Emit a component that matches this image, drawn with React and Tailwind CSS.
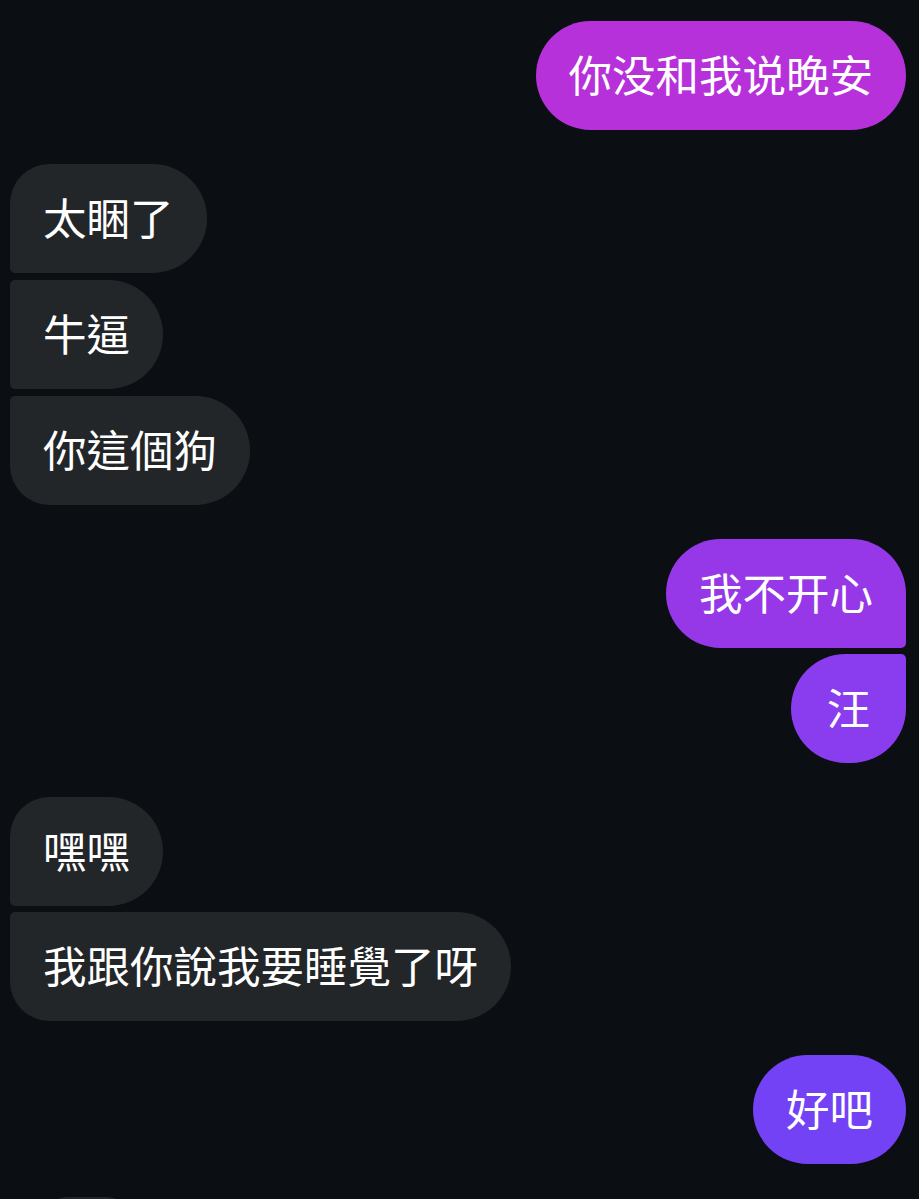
const messages = [
    { id: 1, side: 'right', text: '你没和我说晚安', shape: 'single', color: 'bg-[#b631d9]', lang: 'sc', gapTop: 'mt-0' },
    { id: 2, side: 'left', text: '太睏了', shape: 'first', lang: 'tc', gapTop: 'mt-[34px]' },
    { id: 3, side: 'left', text: '牛逼', shape: 'middle', lang: 'tc', gapTop: 'mt-[7px]' },
    { id: 4, side: 'left', text: '你這個狗', shape: 'last', lang: 'tc', gapTop: 'mt-[7px]' },
    { id: 5, side: 'right', text: '我不开心', shape: 'first', color: 'bg-[#9638e8]', lang: 'sc', gapTop: 'mt-[34px]' },
    { id: 6, side: 'right', text: '汪', shape: 'last', color: 'bg-[#8a3cef]', lang: 'sc', gapTop: 'mt-[6px]' },
    { id: 7, side: 'left', text: '嘿嘿', shape: 'first', lang: 'tc', gapTop: 'mt-[34px]' },
    { id: 8, side: 'left', text: '我跟你說我要睡覺了呀', shape: 'last', lang: 'tc', gapTop: 'mt-[6px]' },
    { id: 9, side: 'right', text: '好吧', shape: 'single', color: 'bg-[#7442f5]', lang: 'sc', gapTop: 'mt-[34px]' },
];

const leftShape = {
    first: 'rounded-tl-[40px] rounded-bl-[5px] rounded-r-[55px]',
    middle: 'rounded-l-[5px] rounded-r-[55px]',
    last: 'rounded-tl-[5px] rounded-bl-[40px] rounded-r-[55px]',
    single: 'rounded-[55px]',
};

const rightShape = {
    first: 'rounded-tr-[55px] rounded-br-[5px] rounded-l-[55px]',
    middle: 'rounded-r-[5px] rounded-l-[55px]',
    last: 'rounded-tr-[5px] rounded-br-[55px] rounded-l-[55px]',
    single: 'rounded-[55px]',
};

function Bubble({ msg }) {
    const isRight = msg.side === 'right';
    const shape = isRight ? rightShape[msg.shape] : leftShape[msg.shape];
    const font = msg.lang === 'tc'
        ? "font-['Noto_Sans_CJK_TC','Noto_Sans_CJK_SC',sans-serif]"
        : "font-['Noto_Sans_CJK_SC',sans-serif]";
    return (
        <div className={`flex ${isRight ? 'justify-end' : 'justify-start'} ${msg.gapTop}`}>
            <div
                className={`h-[109px] min-w-[115px] flex items-center justify-center px-[33px] pb-[4px] text-[43.5px] leading-none text-white ${font} ${shape} ${
                    isRight ? msg.color : 'bg-[#232629]'
                }`}
            >
                {msg.text}
            </div>
        </div>
    );
}

export default function App() {
    return (
        <div className="w-[919px] h-[1199px] overflow-hidden bg-[#0b0f13] pt-[21px] pl-[10px] pr-[13px]">
            {messages.map((m) => (
                <Bubble key={m.id} msg={m} />
            ))}
            <div className="mt-[33px] ml-[37px] w-[80px] h-[40px] rounded-[20px] bg-[#232629]" />
        </div>
    );
}
